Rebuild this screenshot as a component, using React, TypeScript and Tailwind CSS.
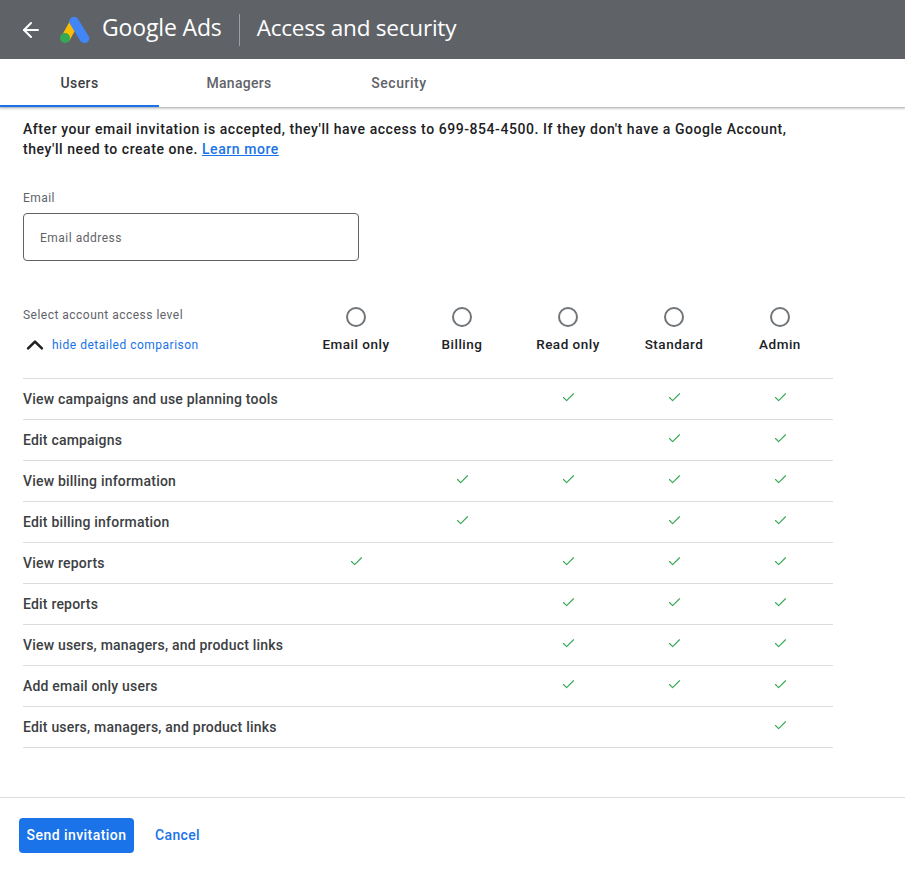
import React from "react";
import { ArrowLeft, Check, ChevronUp } from "lucide-react";

const levels = ["Email only", "Billing", "Read only", "Standard", "Admin"];

const rows: { label: string; checks: number[] }[] = [
  { label: "View campaigns and use planning tools", checks: [2, 3, 4] },
  { label: "Edit campaigns", checks: [3, 4] },
  { label: "View billing information", checks: [1, 2, 3, 4] },
  { label: "Edit billing information", checks: [1, 3, 4] },
  { label: "View reports", checks: [0, 2, 3, 4] },
  { label: "Edit reports", checks: [2, 3, 4] },
  { label: "View users, managers, and product links", checks: [2, 3, 4] },
  { label: "Add email only users", checks: [2, 3, 4] },
  { label: "Edit users, managers, and product links", checks: [4] },
];

const AdsLogo = () => (
  <svg width="32" height="28" viewBox="0 0 32 28" fill="none">
    <path d="M7 21.5 15 7" stroke="#fbbc04" strokeWidth="9" strokeLinecap="round" />
    <path d="M15 5.5 25.5 22.5" stroke="#4285f4" strokeWidth="9.5" strokeLinecap="round" />
    <circle cx="6" cy="22" r="5" fill="#34a853" />
  </svg>
);

export default function App() {
  return (
    <div className="h-[874px] w-[905px] overflow-hidden bg-white font-['Roboto',sans-serif] text-[#202124]">
      <header className="flex h-[59px] items-center bg-[#5f6368] text-white">
        <ArrowLeft className="ml-[19px] h-[24px] w-[24px]" strokeWidth={2} />
        <div className="ml-[16px]">
          <AdsLogo />
        </div>
        <span className="ml-[11px] mb-[4px] font-['Open_Sans',sans-serif] text-[23px] tracking-[-0.15px]">Google Ads</span>
        <div className="ml-[17px] h-[32px] w-px bg-[#9aa0a6]" />
        <h1 className="ml-[17px] mb-[4px] font-['Open_Sans',sans-serif] text-[22.5px] font-normal tracking-[-0.22px]">Access and security</h1>
      </header>

      <nav className="flex h-[49px] border-b border-[#bdc1c6] shadow-[0_1px_2px_rgba(60,64,67,0.25)]">
        <div className="flex w-[159px] items-center justify-center border-b-2 border-[#1a73e8] pt-[2px] text-[14px] font-medium tracking-[0.4px] text-[#3c4043]">Users</div>
        <div className="flex w-[160px] items-center justify-center text-[14px] font-medium tracking-[0.3px] text-[#5f6368]">Managers</div>
        <div className="flex w-[160px] items-center justify-center text-[14px] font-medium tracking-[0.55px] text-[#5f6368]">Security</div>
      </nav>

      <main className="pl-[23px]">
        <p className="mt-[11px] w-[790px] text-[14px] font-medium leading-[20px] tracking-[0.56px] text-[#202124]">
          After your email invitation is accepted, they'll have access to 699-854-4500. If they don't have a Google Account, they'll need to create one.{" "}
          <a className="text-[#1a73e8] underline">Learn more</a>
        </p>

        <label className="mt-[31px] block text-[12px] leading-[16px] tracking-[0.45px] text-[#5f6368]">Email</label>
        <div className="mt-[7px] flex h-[48px] w-[336px] items-center rounded-[4px] border border-[#5f6368] pl-[16px] pt-[1px] text-[12px] tracking-[0.5px] text-[#5f6368]">
          Email address
        </div>

        <div className="mt-[40px] grid h-[78px] w-[810px] grid-cols-[280px_repeat(5,106px)] border-b border-[#dadce0]">
          <div>
            <div className="mt-[6px] text-[12px] leading-[16px] tracking-[0.48px] text-[#5f6368]">Select account access level</div>
            <div className="mt-[10px] flex items-center text-[12px] leading-[16px] tracking-[0.5px] text-[#1a73e8]">
              <ChevronUp className="h-[24px] w-[24px] scale-[1.15] text-[#202124]" strokeWidth={2.25} />
              <span className="ml-[5px]">hide detailed comparison</span>
            </div>
          </div>
          {levels.map((level) => (
            <div key={level} className="flex flex-col items-center">
              <div className="mt-[6px] h-[20px] w-[20px] rounded-full border-2 border-[#70757a]" />
              <div className="mt-[7px] text-[13.5px] font-medium leading-[20px] tracking-[0.5px] text-[#202124]">{level}</div>
            </div>
          ))}
        </div>

        {rows.map((row) => (
          <div key={row.label} className="grid h-[41px] w-[810px] grid-cols-[280px_repeat(5,106px)] items-center border-b border-[#dadce0]">
            <div className="text-[14px] font-medium tracking-[0.2px] text-[#3c4043]">{row.label}</div>
            {levels.map((_, i) => (
              <div key={i} className="flex justify-center pb-[4px]">
                {row.checks.includes(i) && <Check className="h-[15px] w-[15px] text-[#34a853]" strokeWidth={1.75} />}
              </div>
            ))}
          </div>
        ))}
      </main>

      <footer className="mt-[49px] flex h-[75px] items-center border-t border-[#dadce0] pl-[19px]">
        <button className="h-[35px] w-[115px] rounded-[4px] bg-[#1a73e8] text-[14px] font-medium tracking-[0.45px] text-white">Send invitation</button>
        <button className="ml-[21px] text-[14px] font-medium tracking-[0.35px] text-[#1a73e8]">Cancel</button>
      </footer>
    </div>
  );
}
